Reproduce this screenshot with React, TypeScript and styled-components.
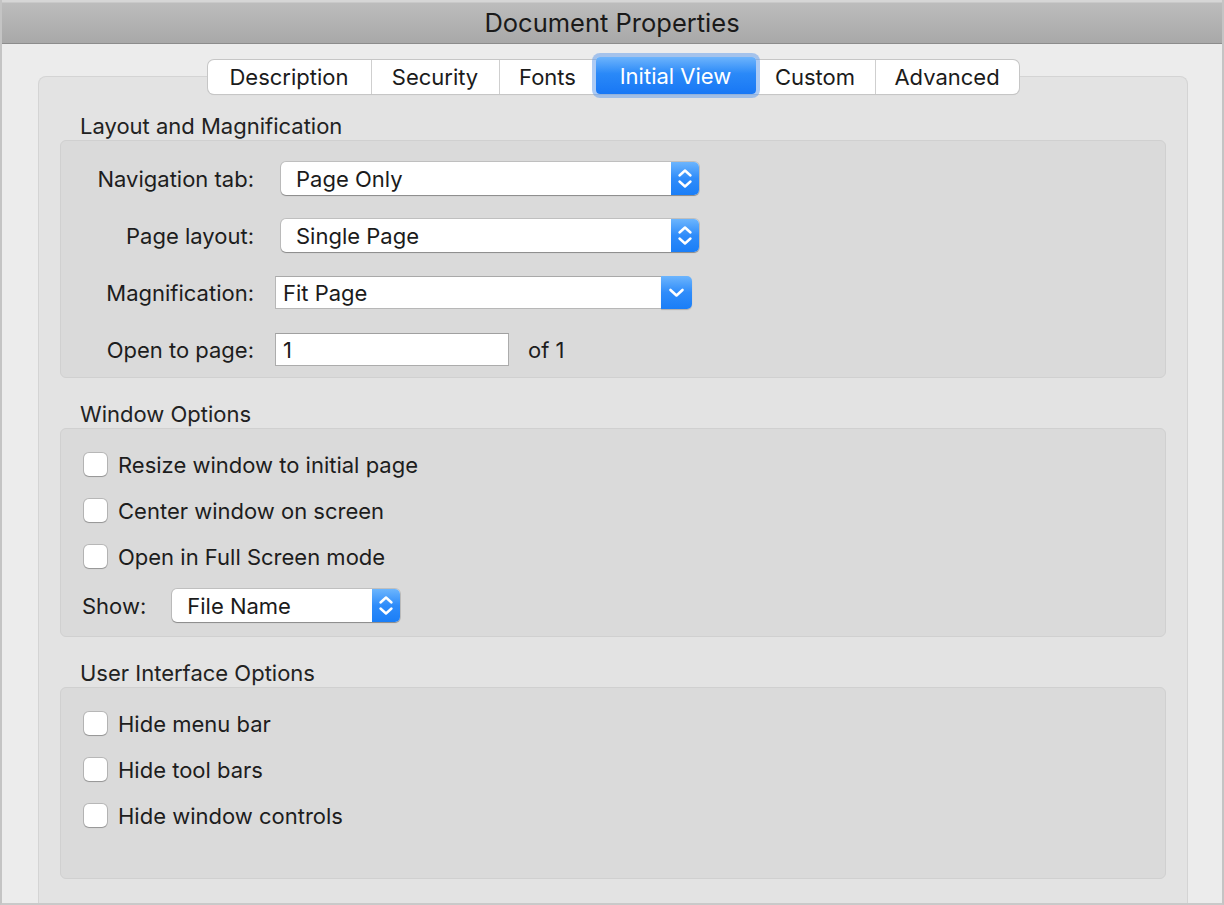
import React from 'react';
import styled, { createGlobalStyle } from 'styled-components';

const Global = createGlobalStyle`
  html, body { margin: 0; padding: 0; background: #ececec; }
  body { font-family: Inter, "Helvetica Neue", "Liberation Sans", sans-serif; color: #1d1d1d; }
  * { box-sizing: border-box; }
`;

const Window = styled.div`
  width: 1224px;
  height: 905px;
  display: flex;
  flex-direction: column;
  overflow: hidden;
  border-left: 2px solid #c4c4c4;
  border-right: 2px solid #c4c4c4;
  border-bottom: 2px solid #c9c9c9;
  background: #ececec;
`;

const TitleBar = styled.div`
  height: 44px;
  flex: none;
  display: flex;
  align-items: center;
  justify-content: center;
  background: linear-gradient(#d6d6d6 0, #d6d6d6 2px, #bcbcbc 3px, #a8a8a8 100%);
  border-bottom: 1px solid #8c8c8c;
  font-size: 25.5px;
  color: #1a1a1a;
  padding-top: 1px;
`;

const Content = styled.div`
  flex: 1;
  display: flex;
  flex-direction: column;
  padding: 16px 34px 0 36px;
`;

const TabRow = styled.div`
  display: flex;
  justify-content: center;
  position: relative;
  z-index: 1;
`;

const Segmented = styled.div`
  display: inline-flex;
  height: 34px;
  background: #fff;
  border-radius: 6px;
  box-shadow: 0 0 0 1px #c6c6c6, 0 1px 1px rgba(0, 0, 0, 0.12);
`;

const Segment = styled.div<{ $active?: boolean; $divider?: boolean; $w: number }>`
  width: ${(p) => p.$w}px;
  display: flex;
  align-items: center;
  justify-content: center;
  font-size: 22px;
  white-space: nowrap;
  border-left: ${(p) => (p.$divider ? '1px solid #cfcfcf' : 'none')};
  color: ${(p) => (p.$active ? '#fff' : '#1b1b1b')};
  background: ${(p) => (p.$active ? 'linear-gradient(#6db4fc, #2a89f8 45%, #1877f5)' : 'transparent')};
  border-radius: ${(p) => (p.$active ? '4px' : '0')};
  margin-top: ${(p) => (p.$active ? '-3px' : '0')};
  box-shadow: ${(p) => (p.$active ? '0 0 0 4px rgba(105, 160, 235, 0.55)' : 'none')};
`;

const TabBox = styled.div`
  flex: 1;
  margin-top: -18px;
  background: #e3e3e3;
  border: 1px solid #d4d4d4;
  border-bottom: none;
  border-radius: 8px 8px 0 0;
  padding: 35px 21px 0 21px;
  display: flex;
  flex-direction: column;
`;

const SectionTitle = styled.div<{ $spaced?: boolean }>`
  font-size: 22px;
  line-height: 28px;
  padding-left: 20px;
  margin-top: ${(p) => (p.$spaced ? '22px' : '0')};
  color: #222;
`;

const Group = styled.div<{ $pt: number; $pb: number; $gap: number; $pl?: number }>`
  background: #dadada;
  border: 1px solid #d0d0d0;
  border-radius: 6px;
  padding: ${(p) => p.$pt}px 20px ${(p) => p.$pb}px ${(p) => p.$pl ?? 0}px;
  display: flex;
  flex-direction: column;
  gap: ${(p) => p.$gap}px;
`;

const FormRow = styled.div`
  display: flex;
  align-items: center;
  height: 33px;
`;

const FieldLabel = styled.div`
  width: 193px;
  text-align: right;
  font-size: 22px;
  color: #1d1d1d;
  flex: none;
`;

const PopUp = styled.div<{ $w: number; $ml: number }>`
  width: ${(p) => p.$w}px;
  margin-left: ${(p) => p.$ml}px;
  height: 33px;
  display: flex;
  background: #fff;
  border-radius: 5px;
  box-shadow: 0 0 0 1px rgba(0, 0, 0, 0.12), 0 1px 1px rgba(0, 0, 0, 0.28);
  flex: none;
`;

const PopText = styled.div<{ $pl?: number }>`
  flex: 1;
  display: flex;
  align-items: center;
  padding-left: ${(p) => p.$pl ?? 15}px;
  font-size: 22px;
  color: #1b1b1b;
`;

const BlueButton = styled.div<{ $w: number }>`
  width: ${(p) => p.$w}px;
  flex: none;
  display: flex;
  align-items: center;
  justify-content: center;
  background: linear-gradient(#6cb5fd, #2f8cfa 50%, #1a7ef7);
  border-radius: 0 5px 5px 0;
`;

const Combo = styled.div<{ $ml: number }>`
  margin-left: ${(p) => p.$ml}px;
  display: flex;
  height: 33px;
  flex: none;
`;

const ComboField = styled.div`
  width: 386px;
  background: #fff;
  border: 1px solid #b7b7b7;
  border-top-color: #a9a9a9;
  border-right: none;
  display: flex;
  align-items: center;
  padding-left: 7px;
  font-size: 22px;
  color: #1b1b1b;
`;

const ComboButton = styled(BlueButton)`
  box-shadow: 0 1px 1px rgba(0, 0, 0, 0.2);
`;

const TextInput = styled.div<{ $ml: number }>`
  margin-left: ${(p) => p.$ml}px;
  width: 234px;
  height: 33px;
  background: #fff;
  border: 1px solid #acacac;
  border-top-color: #a0a0a0;
  display: flex;
  align-items: center;
  padding-left: 7px;
  font-size: 22px;
  color: #1b1b1b;
  flex: none;
`;

const Suffix = styled.div`
  margin-left: 19px;
  font-size: 22px;
  color: #1d1d1d;
`;

const CheckRow = styled.label`
  display: flex;
  align-items: center;
  height: 23px;
  gap: 11px;
  font-size: 22px;
  color: #1d1d1d;
`;

const CheckBox = styled.span`
  width: 23px;
  height: 23px;
  flex: none;
  background: #fff;
  border-radius: 5px;
  box-shadow: 0 0 0 1px rgba(0, 0, 0, 0.16), 0 1px 1px rgba(0, 0, 0, 0.18);
`;

const ShowRow = styled.div`
  display: flex;
  align-items: center;
  height: 33px;
  margin-top: -2px;
  margin-left: -2px;
`;

const ShowLabel = styled.div`
  font-size: 22px;
  color: #1d1d1d;
`;

const Stepper = () => (
  <svg width="28" height="33" viewBox="0 0 28 33">
    <path d="M8.5 13.5 L14 8.5 L19.5 13.5" fill="none" stroke="#fff" strokeWidth="2.4" strokeLinecap="round" strokeLinejoin="round" />
    <path d="M8.5 19.5 L14 24.5 L19.5 19.5" fill="none" stroke="#fff" strokeWidth="2.4" strokeLinecap="round" strokeLinejoin="round" />
  </svg>
);

const ChevronDown = () => (
  <svg width="31" height="33" viewBox="0 0 31 33">
    <path d="M9.5 14 L15.5 19.5 L21.5 14" fill="none" stroke="#fff" strokeWidth="2.6" strokeLinecap="round" strokeLinejoin="round" />
  </svg>
);

const tabs: { label: string; w: number }[] = [
  { label: 'Description', w: 163 },
  { label: 'Security', w: 128 },
  { label: 'Fonts', w: 97 },
  { label: 'Initial View', w: 160 },
  { label: 'Custom', w: 119 },
  { label: 'Advanced', w: 144 },
];
const activeTab = 'Initial View';

export default function App() {
  return (
    <>
      <Global />
      <Window>
        <TitleBar>Document Properties</TitleBar>
        <Content>
          <TabRow>
            <Segmented>
              {tabs.map((t, i) => {
                const active = t.label === activeTab;
                const prevActive = i > 0 && tabs[i - 1].label === activeTab;
                return (
                  <Segment key={t.label} $w={t.w} $active={active} $divider={i > 0 && !active && !prevActive}>
                    {t.label}
                  </Segment>
                );
              })}
            </Segmented>
          </TabRow>
          <TabBox>
            <SectionTitle>Layout and Magnification</SectionTitle>
            <Group $pt={21} $pb={11} $gap={24}>
              <FormRow>
                <FieldLabel>Navigation tab:</FieldLabel>
                <PopUp $w={418} $ml={27}>
                  <PopText>Page Only</PopText>
                  <BlueButton $w={28}>
                    <Stepper />
                  </BlueButton>
                </PopUp>
              </FormRow>
              <FormRow>
                <FieldLabel>Page layout:</FieldLabel>
                <PopUp $w={418} $ml={27}>
                  <PopText>Single Page</PopText>
                  <BlueButton $w={28}>
                    <Stepper />
                  </BlueButton>
                </PopUp>
              </FormRow>
              <FormRow>
                <FieldLabel>Magnification:</FieldLabel>
                <Combo $ml={21}>
                  <ComboField>Fit Page</ComboField>
                  <ComboButton $w={31}>
                    <ChevronDown />
                  </ComboButton>
                </Combo>
              </FormRow>
              <FormRow>
                <FieldLabel>Open to page:</FieldLabel>
                <TextInput $ml={21}>1</TextInput>
                <Suffix>of 1</Suffix>
              </FormRow>
            </Group>

            <SectionTitle $spaced>Window Options</SectionTitle>
            <Group $pt={24} $pb={14} $gap={23} $pl={23}>
              <CheckRow>
                <CheckBox />
                Resize window to initial page
              </CheckRow>
              <CheckRow>
                <CheckBox />
                Center window on screen
              </CheckRow>
              <CheckRow>
                <CheckBox />
                Open in Full Screen mode
              </CheckRow>
              <ShowRow>
                <ShowLabel>Show:</ShowLabel>
                <PopUp $w={228} $ml={26}>
                  <PopText>File Name</PopText>
                  <BlueButton $w={28}>
                    <Stepper />
                  </BlueButton>
                </PopUp>
              </ShowRow>
            </Group>

            <SectionTitle $spaced>User Interface Options</SectionTitle>
            <Group $pt={24} $pb={51} $gap={23} $pl={23}>
              <CheckRow>
                <CheckBox />
                Hide menu bar
              </CheckRow>
              <CheckRow>
                <CheckBox />
                Hide tool bars
              </CheckRow>
              <CheckRow>
                <CheckBox />
                Hide window controls
              </CheckRow>
            </Group>
          </TabBox>
        </Content>
      </Window>
    </>
  );
}
